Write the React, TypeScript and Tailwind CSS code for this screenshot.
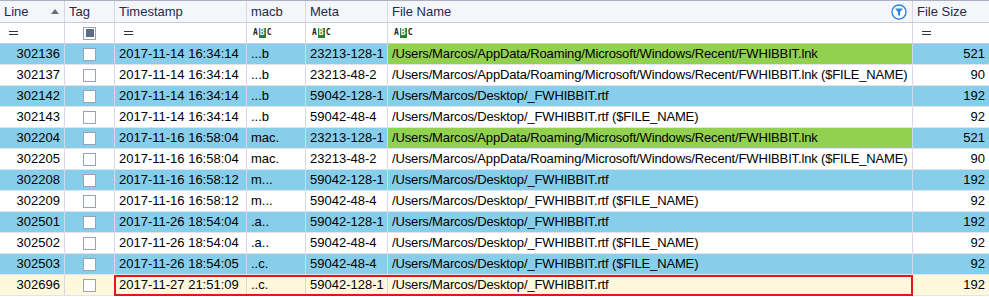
import { ReactNode } from 'react';

type Row = {
  line: number;
  ts: string;
  macb: string;
  meta: string;
  file: string;
  size: number;
  bg: 'blue' | 'white' | 'cream';
  green?: boolean;
  selected?: boolean;
};

const LNK = '/Users/Marcos/AppData/Roaming/Microsoft/Windows/Recent/FWHIBBIT.lnk';
const RTF = '/Users/Marcos/Desktop/_FWHIBBIT.rtf';

const rows: Row[] = [
  { line: 302136, ts: '2017-11-14 16:34:14', macb: '...b', meta: '23213-128-1', file: LNK, size: 521, bg: 'blue', green: true },
  { line: 302137, ts: '2017-11-14 16:34:14', macb: '...b', meta: '23213-48-2', file: LNK + ' ($FILE_NAME)', size: 90, bg: 'white', green: true },
  { line: 302142, ts: '2017-11-14 16:34:14', macb: '...b', meta: '59042-128-1', file: RTF, size: 192, bg: 'blue' },
  { line: 302143, ts: '2017-11-14 16:34:14', macb: '...b', meta: '59042-48-4', file: RTF + ' ($FILE_NAME)', size: 92, bg: 'white' },
  { line: 302204, ts: '2017-11-16 16:58:04', macb: 'mac.', meta: '23213-128-1', file: LNK, size: 521, bg: 'blue', green: true },
  { line: 302205, ts: '2017-11-16 16:58:04', macb: 'mac.', meta: '23213-48-2', file: LNK + ' ($FILE_NAME)', size: 90, bg: 'white', green: true },
  { line: 302208, ts: '2017-11-16 16:58:12', macb: 'm...', meta: '59042-128-1', file: RTF, size: 192, bg: 'blue' },
  { line: 302209, ts: '2017-11-16 16:58:12', macb: 'm...', meta: '59042-48-4', file: RTF + ' ($FILE_NAME)', size: 92, bg: 'white' },
  { line: 302501, ts: '2017-11-26 18:54:04', macb: '.a..', meta: '59042-128-1', file: RTF, size: 192, bg: 'blue' },
  { line: 302502, ts: '2017-11-26 18:54:04', macb: '.a..', meta: '59042-48-4', file: RTF + ' ($FILE_NAME)', size: 92, bg: 'white' },
  { line: 302503, ts: '2017-11-26 18:54:05', macb: '..c.', meta: '59042-48-4', file: RTF + ' ($FILE_NAME)', size: 92, bg: 'blue' },
  { line: 302696, ts: '2017-11-27 21:51:09', macb: '..c.', meta: '59042-128-1', file: RTF, size: 192, bg: 'cream', selected: true },
];

const cols = 'grid grid-cols-[65px_50px_132px_59px_82px_525px_76px]';

const bgClass = {
  blue: 'bg-[#87ceeb]',
  white: 'bg-white',
  cream: 'bg-[#fff8dc]',
};

// little "ABC" text-filter glyph
const AbcIcon = () => (
  <span className="flex items-center h-[10px] text-[8px] leading-none font-bold font-['DejaVu_Sans_Mono',monospace] ml-[1px]">
    <span className="text-[#222] px-[1px]">A</span>
    <span className="bg-[#2e7d32] text-white px-[1px] h-[10px] flex items-center">B</span>
    <span className="text-[#222] px-[1px]">C</span>
  </span>
);

const EqIcon = () => (
  <span className="block w-[9px] h-[4px] ml-[5px] border-t border-b border-[#333]" />
);

const Check = ({ filled }: { filled?: boolean }) => (
  <span className="w-[13px] h-[13px] border border-[#9aa3b5] bg-white flex items-center justify-center">
    {filled && <span className="w-[8px] h-[8px] bg-[#5d6b86]" />}
  </span>
);

const FilterIcon = () => (
  <svg width="16" height="16" viewBox="0 0 16 16">
    <circle cx="8" cy="8" r="7" fill="white" stroke="#2e86de" strokeWidth="1.4" />
    <path d="M4 4.5 H12 L9 8 V12 L7 11 V8 Z" fill="#2e86de" />
  </svg>
);

const HeadCell = ({ children, last }: { children: ReactNode; last?: boolean }) => (
  <div className={`flex items-center px-[4px] ${last ? '' : 'border-r border-[#d6d8e6]'}`}>{children}</div>
);

export default function App() {
  return (
    <div className="w-[989px] h-[297px] overflow-hidden bg-white font-['Liberation_Sans',Arial,sans-serif] text-[13px] text-black">
      {/* header */}
      <div className={`${cols} h-[23px] bg-[#f5f6fa] border-t border-b border-t-[#a9b0c0] border-b-[#c9ccdb] text-[#1d2a4b]`}>
        <HeadCell>
          <span className="flex-1">Line</span>
          <span className="w-0 h-0 border-l-[4px] border-r-[4px] border-b-[5px] border-l-transparent border-r-transparent border-b-[#6b6f78] mr-[1px]" />
        </HeadCell>
        <HeadCell>Tag</HeadCell>
        <HeadCell>Timestamp</HeadCell>
        <HeadCell>macb</HeadCell>
        <HeadCell>Meta</HeadCell>
        <HeadCell>
          <span className="flex-1">File Name</span>
          <span className="mr-[1px]"><FilterIcon /></span>
        </HeadCell>
        <HeadCell last>File Size</HeadCell>
      </div>

      {/* filter row */}
      <div className={`${cols} h-[21px] bg-white border-b border-[#c9ccdb]`}>
        <HeadCell><EqIcon /></HeadCell>
        <div className="flex items-center justify-center border-r border-[#d6d8e6]"><Check filled /></div>
        <HeadCell><EqIcon /></HeadCell>
        <HeadCell><AbcIcon /></HeadCell>
        <HeadCell><AbcIcon /></HeadCell>
        <HeadCell><AbcIcon /></HeadCell>
        <HeadCell last><EqIcon /></HeadCell>
      </div>

      {/* data rows */}
      {rows.map((r) => {
        const bg = bgClass[r.bg];
        const cell = `flex items-center px-[4px] border-r border-[#d6d8e6] whitespace-nowrap overflow-hidden ${bg}`;
        return (
          <div key={r.line} className={`${cols} relative h-[21px] border-b border-[#e2e3ec]`}>
            <div className={`${cell} justify-end`}>{r.line}</div>
            <div className={`${cell} justify-center`}><Check /></div>
            <div className={cell}>{r.ts}</div>
            <div className={cell}>{r.macb}</div>
            <div className={cell}>{r.meta}</div>
            <div className={`${cell} tracking-[-0.15px] ${r.green ? 'bg-[#92d050]' : ''}`}>{r.file}</div>
            <div className={`flex items-center justify-end px-[4px] ${bg}`}>{r.size}</div>
            {r.selected && (
              <div className="absolute left-[114px] top-0 w-[799px] h-[21px] border-2 border-[#e8141c] pointer-events-none" />
            )}
          </div>
        );
      })}
    </div>
  );
}
